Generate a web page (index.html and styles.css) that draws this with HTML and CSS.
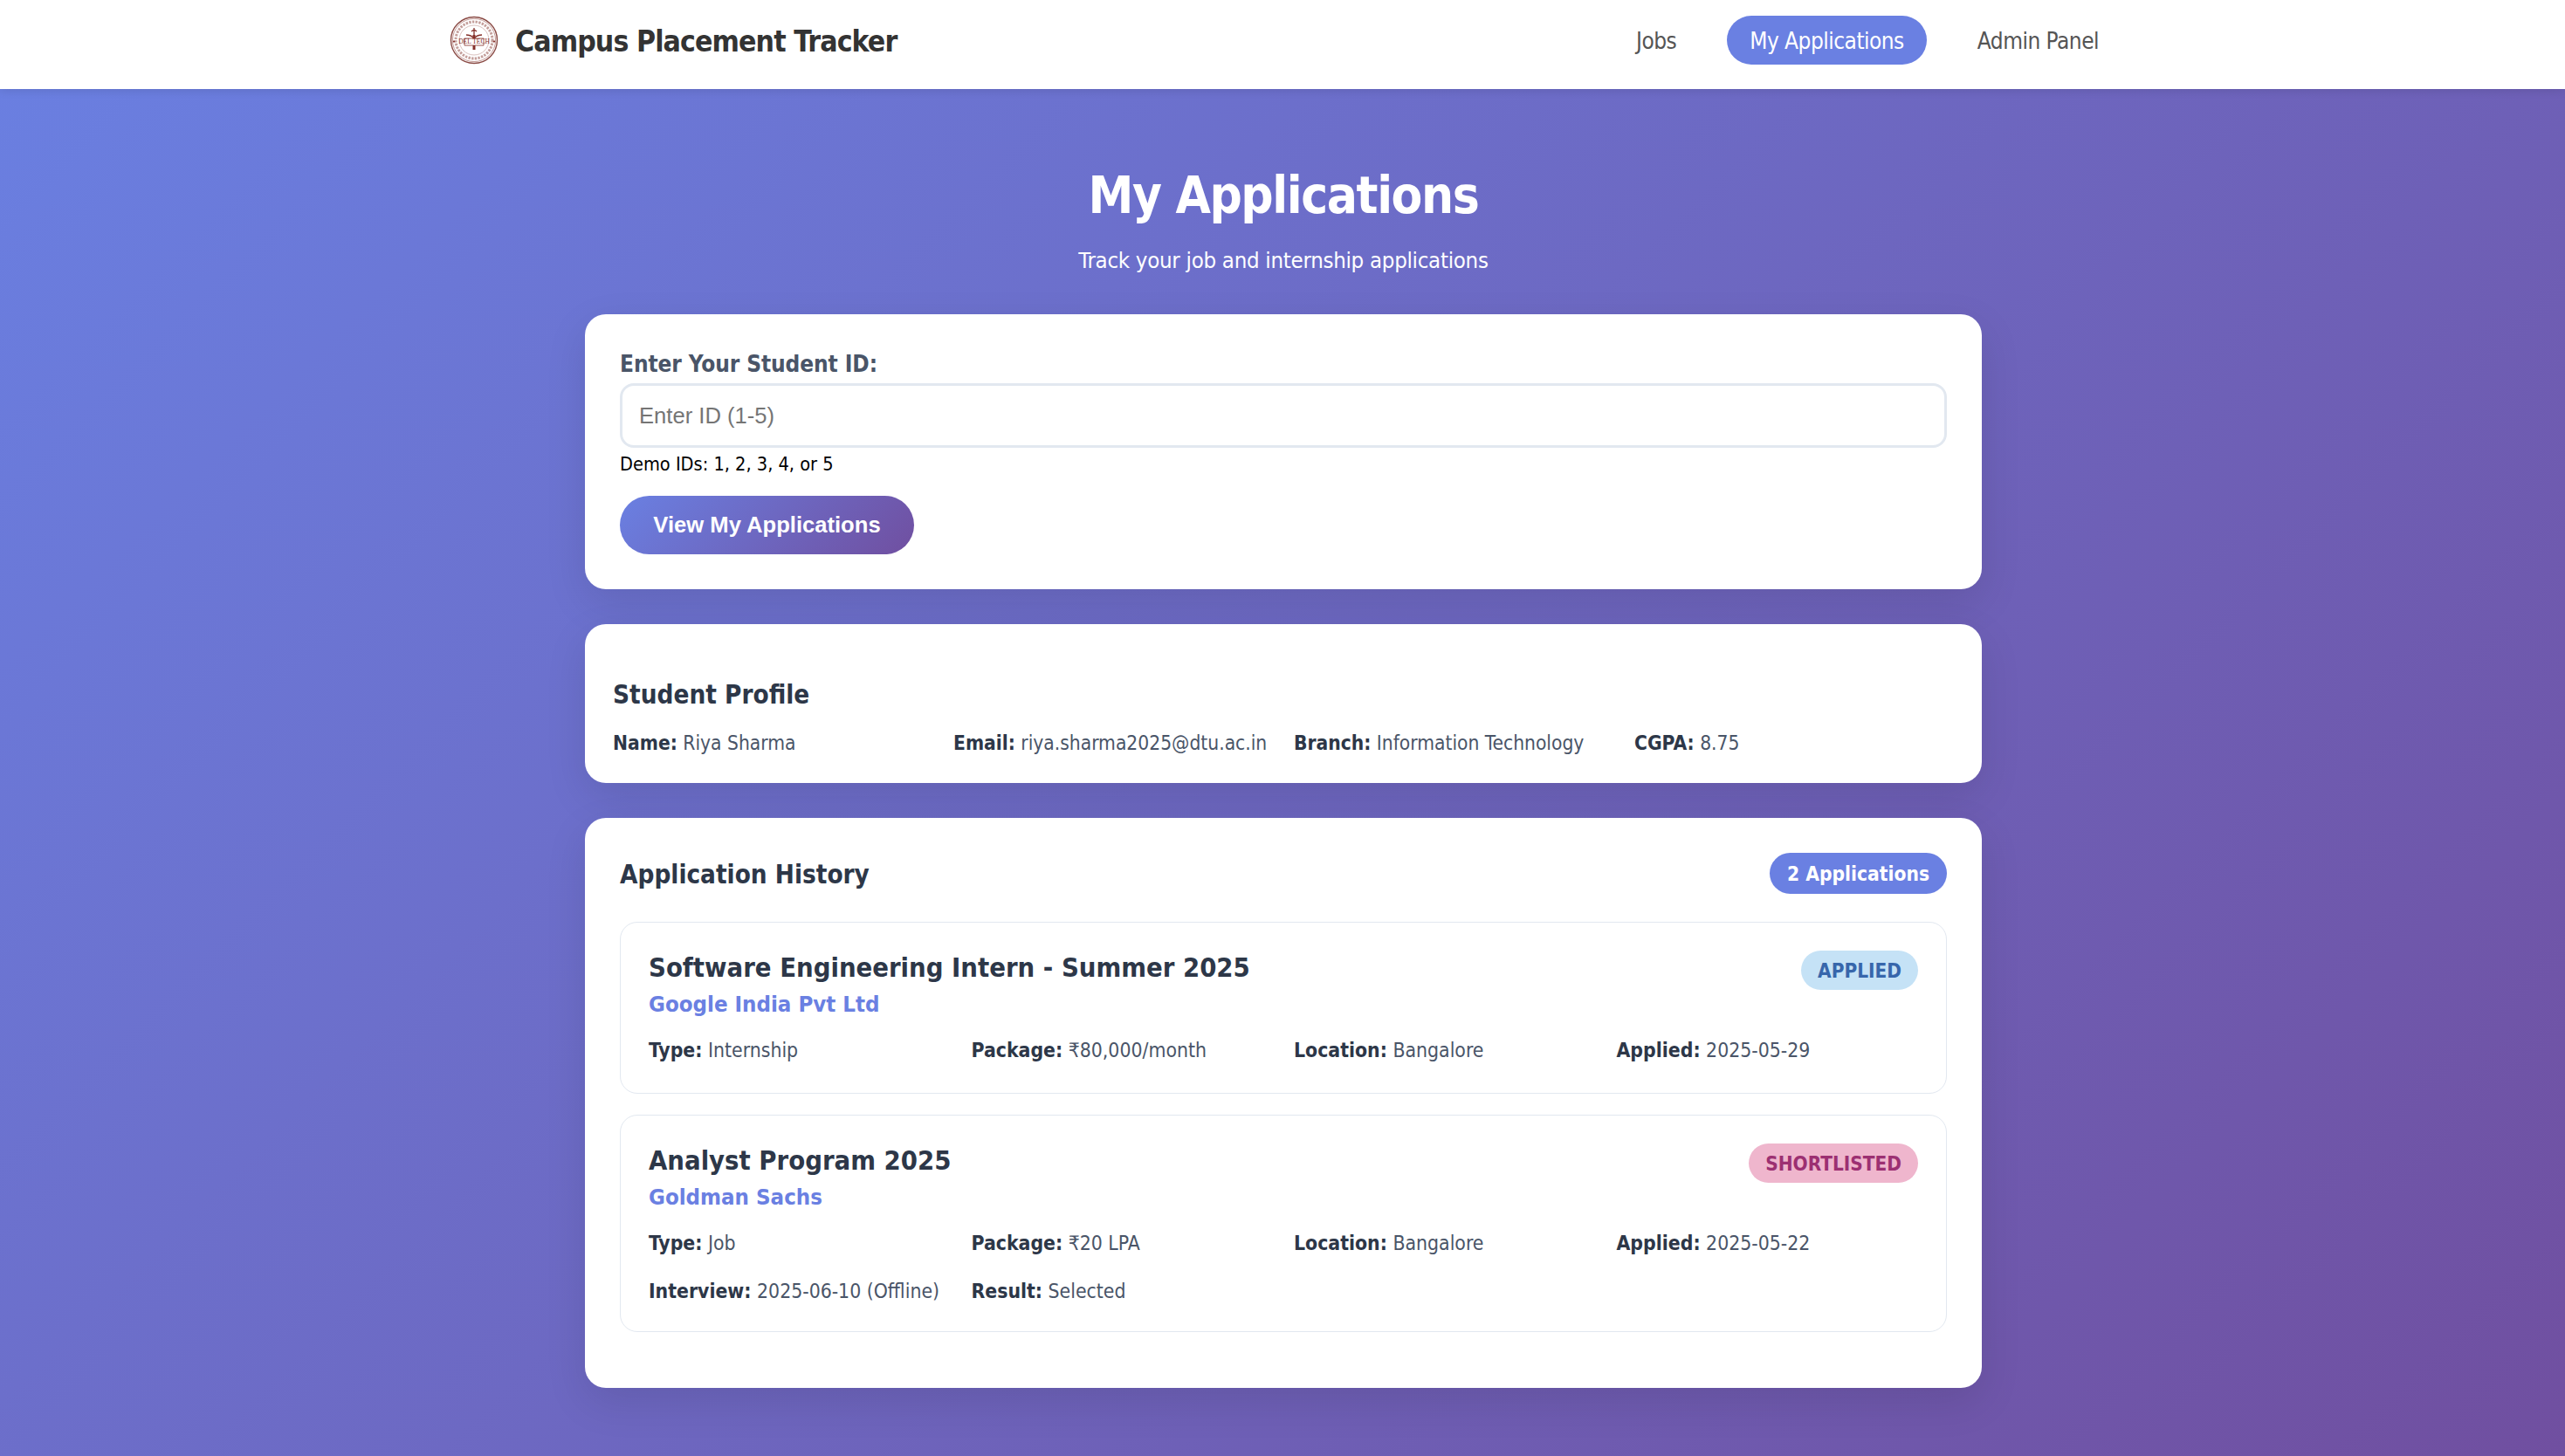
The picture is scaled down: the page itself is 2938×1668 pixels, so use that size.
FILE: index.html
```html
<!DOCTYPE html>
<html lang="en">
<head>
<meta charset="utf-8">
<title>Campus Placement Tracker</title>
<link rel="stylesheet" href="styles.css">
</head>
<body>
<nav class="nav">
  <div class="nav-inner">
    <div class="brand">
      <svg class="logo" viewBox="0 0 66 66" aria-hidden="true">
        <circle cx="33" cy="33" r="26.5" fill="#fff" stroke="#8a4a44" stroke-width="1.4"/>
        <circle cx="33" cy="33" r="24.6" fill="none" stroke="#a9706a" stroke-width=".7"/>
        <circle cx="33" cy="33" r="17" fill="none" stroke="#c9a5a0" stroke-width=".7"/>
        <circle cx="33" cy="33" r="21" fill="none" stroke="#9c5f59" stroke-width="3" stroke-dasharray="2.4 1.3" opacity=".6"/>
        <path d="M33 19v11M30 23q3-3 6 0M24 27q5 0 8 3M42 27q-5 0-8 3" fill="none" stroke="#85302a" stroke-width="1.3"/>
        <path d="M31.5 27h3v17h-3z" fill="#85302a"/>
        <path d="M22 31h22v8H22z" fill="#fff" stroke="#85302a" stroke-width=".8"/>
        <text class="logo-text" x="33" y="37.4" text-anchor="middle">DEL TECH</text>
        <path d="M10 33l1.2 1.6L10 36l-1.2-1.4zM56 33l1.2 1.6L56 36l-1.2-1.4z" fill="#85302a"/>
      </svg>
      <span class="brand-name">Campus Placement Tracker</span>
    </div>
    <div class="nav-links">
      <a class="nav-link">Jobs</a>
      <a class="nav-link active">My Applications</a>
      <a class="nav-link">Admin Panel</a>
    </div>
  </div>
</nav>
<main class="page">
  <header class="hero">
    <h1>My Applications</h1>
    <p>Track your job and internship applications</p>
  </header>

  <section class="card lookup">
    <label class="field-label" for="sid">Enter Your Student ID:</label>
    <input class="field-input" id="sid" type="text" placeholder="Enter ID (1-5)">
    <small class="hint">Demo IDs: 1, 2, 3, 4, or 5</small>
    <button class="btn" type="button">View My Applications</button>
  </section>

  <section class="card profile">
    <h3>Student Profile</h3>
    <div class="profile-grid">
      <div class="fact"><strong>Name:</strong> Riya Sharma</div>
      <div class="fact"><strong>Email:</strong> riya.sharma2025@dtu.ac.in</div>
      <div class="fact"><strong>Branch:</strong> Information Technology</div>
      <div class="fact"><strong>CGPA:</strong> 8.75</div>
    </div>
  </section>

  <section class="card history">
    <div class="history-head">
      <h2>Application History</h2>
      <span class="count">2 Applications</span>
    </div>
    <article class="item">
      <div class="item-head">
        <div>
          <h4>Software Engineering Intern - Summer 2025</h4>
          <div class="company">Google India Pvt Ltd</div>
        </div>
        <span class="status applied">APPLIED</span>
      </div>
      <div class="item-grid">
        <div class="fact"><strong>Type:</strong> Internship</div>
        <div class="fact"><strong>Package:</strong> ₹80,000/month</div>
        <div class="fact"><strong>Location:</strong> Bangalore</div>
        <div class="fact"><strong>Applied:</strong> 2025-05-29</div>
      </div>
    </article>
    <article class="item item-tall">
      <div class="item-head">
        <div>
          <h4>Analyst Program 2025</h4>
          <div class="company">Goldman Sachs</div>
        </div>
        <span class="status shortlisted">SHORTLISTED</span>
      </div>
      <div class="item-grid">
        <div class="fact"><strong>Type:</strong> Job</div>
        <div class="fact"><strong>Package:</strong> ₹20 LPA</div>
        <div class="fact"><strong>Location:</strong> Bangalore</div>
        <div class="fact"><strong>Applied:</strong> 2025-05-22</div>
        <div class="fact"><strong>Interview:</strong> 2025-06-10 (Offline)</div>
        <div class="fact"><strong>Result:</strong> Selected</div>
      </div>
    </article>
  </section>
</main>
</body>
</html>
```
FILE: styles.css
```css
* { box-sizing: border-box; }
html, body { margin: 0; padding: 0; }
body {
  min-height: 1668px;
  font-family: "DejaVu Sans", sans-serif;
  font-stretch: condensed;
  background: linear-gradient(135deg, #6a80e2 0%, #704fa0 100%);
  color: #2d3748;
}
.nav {
  background: #fff;
  height: 102px;
  box-shadow: 0 2px 10px rgba(0,0,0,.1);
}
.nav-inner {
  width: 1922px;
  height: 91px;
  margin: 0 auto;
  display: flex;
  align-items: center;
  justify-content: space-between;
}
.brand { display: flex; align-items: center; gap: 14px; padding-left: 2px; }
.logo { width: 66px; height: 66px; display: block; }
.logo-text { font-family: "Liberation Serif", serif; font-size: 7.5px; fill: #85302a; font-stretch: normal; }
.brand-name { font-size: 33.5px; font-weight: 700; color: #333; letter-spacing: -.9px; padding-top: 4px; }
.nav-links { display: flex; gap: 32px; }
.nav-link {
  height: 56px;
  line-height: 58px;
  padding: 0 26px;
  border-radius: 28px;
  font-size: 26px;
  letter-spacing: -.52px;
  color: #555;
}
.nav-link.active { background: #6a80e2; color: #fff; }
.page { width: 1602px; margin: 0 auto; padding-left: 2px; }
.hero { text-align: center; color: #fff; height: 258px; padding-top: 87px; }
.hero h1 { margin: 0; font-size: 58px; line-height: 70px; font-weight: 700; letter-spacing: -1.4px; }
.hero p { margin: 23px 0 0; font-size: 25.6px; line-height: 32px; letter-spacing: -.28px; }
.card {
  background: #fff;
  border-radius: 24px;
  box-shadow: 0 16px 48px rgba(0,0,0,.1);
  margin-bottom: 40px;
}
.lookup { height: 315px; padding: 41px 40px 0; }
.field-label { display: block; font-size: 26px; line-height: 32px; font-weight: 700; color: #4a5568; margin-bottom: 6px; letter-spacing: -.1px; }
.field-input {
  display: block;
  width: 100%;
  height: 74px;
  border: 3px solid #e2e8f0;
  border-radius: 16px;
  padding: 0 19px;
  font-family: "Liberation Sans", sans-serif;
  font-size: 25.6px;
  background: #fff;
}
.field-input::placeholder { color: #757575; }
.hint { display: block; margin-top: 6px; font-size: 21.6px; line-height: 26px; color: #000; }
.btn {
  display: block;
  margin-top: 23px;
  width: 337px;
  height: 67px;
  border: 0;
  border-radius: 34px;
  background: linear-gradient(135deg, #6a80e2 0%, #704fa0 100%);
  color: #fff;
  font-family: "Liberation Sans", sans-serif;
  font-size: 25.6px;
  font-weight: 700;
}
.profile { height: 182px; padding: 63px 32px 0; }
.profile h3 { margin: 0; font-size: 29.4px; line-height: 36px; font-weight: 700; }
.profile-grid { display: grid; grid-template-columns: repeat(4, 1fr); gap: 24px; margin-top: 22px; }
.fact { font-size: 22.6px; line-height: 31px; color: #4a5568; white-space: nowrap; }
.fact strong { color: #2d3748; font-weight: 700; }
.history { height: 653px; padding: 40px; }
.history-head { display: flex; align-items: center; justify-content: space-between; height: 47px; margin-bottom: 32px; }
.history-head h2 { margin: 0; font-size: 29.4px; line-height: 40px; padding-top: 2px; font-weight: 700; }
.count {
  height: 47px;
  line-height: 49px;
  padding: 0 20px;
  border-radius: 24px;
  background: #6a80e2;
  color: #fff;
  font-size: 22.6px;
  font-weight: 700;
}
.item { border: 1px solid #e2e8f0; border-radius: 20px; padding: 32px 32px 33px; margin-bottom: 24px; }
.item-tall { padding-bottom: 30px; }
.item-head { display: flex; justify-content: space-between; align-items: flex-start; margin-bottom: 22px; }
.item h4 { margin: 0; font-size: 30.7px; line-height: 39px; font-weight: 700; }
.company { font-size: 25.6px; line-height: 33px; font-weight: 700; color: #6a80e2; margin-top: 6px; margin-bottom: -1px; }
.status {
  height: 45px;
  line-height: 47px;
  padding: 0 19px;
  border-radius: 23px;
  font-size: 22.4px;
  font-weight: 700;
}
.status.applied { background: #c5e2f6; color: #3766ab; }
.status.shortlisted { background: #efb6cd; color: #9c3072; }
.item-grid { display: grid; grid-template-columns: repeat(4, 1fr); gap: 24px; }
.item-grid .fact { font-size: 22.8px; }
```
